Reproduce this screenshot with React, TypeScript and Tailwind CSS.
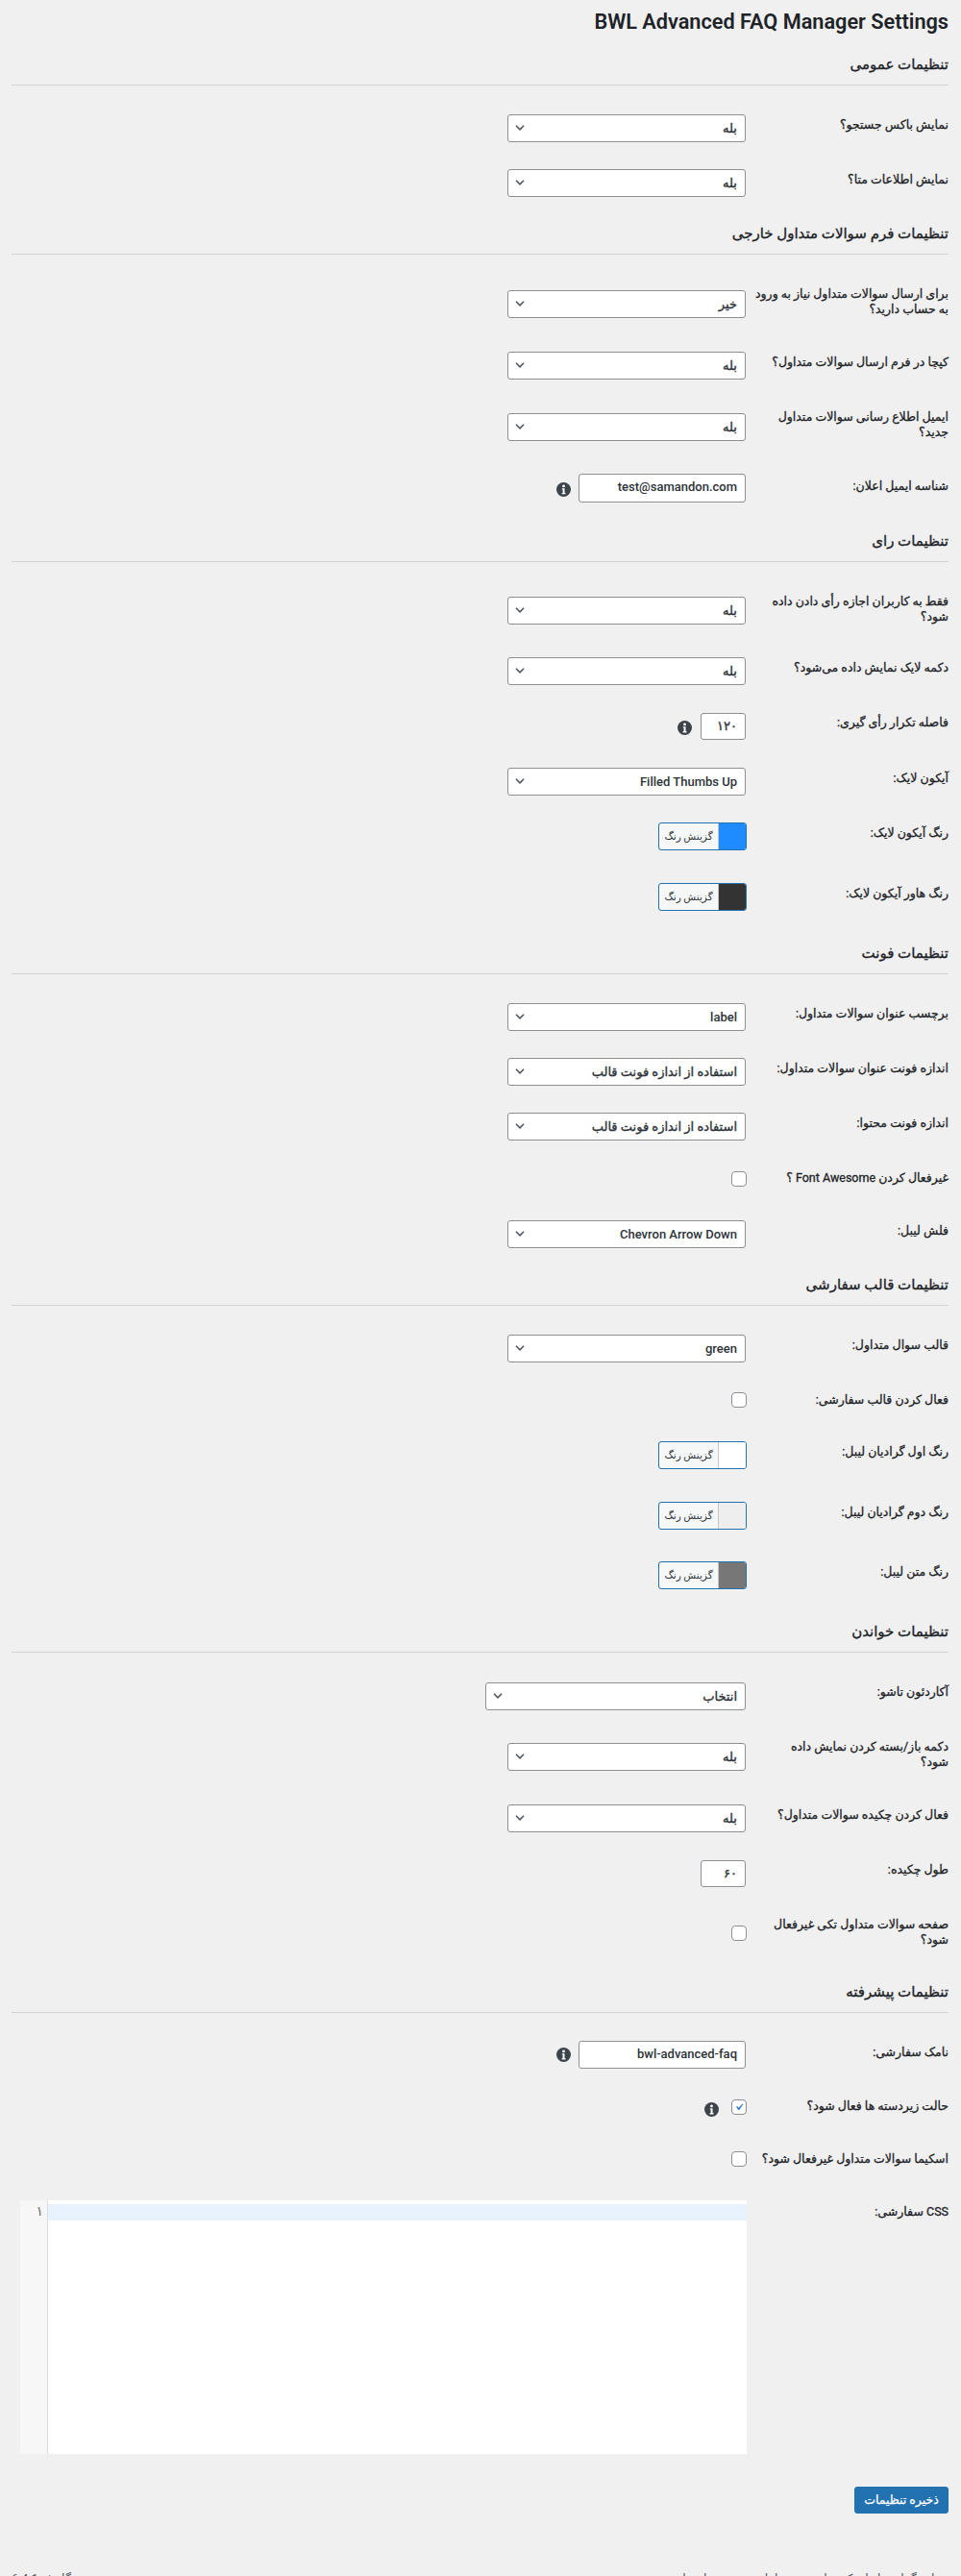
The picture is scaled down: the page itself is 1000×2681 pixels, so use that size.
const fontStack = "font-['Roboto','DejaVu_Sans',sans-serif]";

function Chevron() {
  return (
    <svg viewBox="0 0 20 20" className="w-[16px] h-[16px] shrink-0" fill="none">
      <path d="M5 6l5 5 5-5" stroke="#50575e" strokeWidth="2" />
    </svg>
  );
}

function Info({ className }: { className: string }) {
  return (
    <svg viewBox="0 0 16 16" className={className}>
      <circle cx="8" cy="8" r="8" fill="#3c434a" />
      <circle cx="8" cy="4.2" r="1.5" fill="#fff" />
      <path d="M6.2 6.6h2.9v5.2h1v1.4H6v-1.4h1V8H6.2z" fill="#fff" />
    </svg>
  );
}

function Select({ value, className, latin }: { value: string; className: string; latin?: boolean }) {
  return (
    <div className={`h-[29px] mr-[1px] flex items-center justify-between bg-white border border-[#8c8f94] rounded-[3px] pr-[8px] pl-[4px] text-[#2c3338] ${className}`}>
      {latin ? (
        <span className="text-[13px] font-medium">{value}</span>
      ) : (
        <span className="text-[13px] [-webkit-text-stroke:0.35px_#2c3338]">{value}</span>
      )}
      <Chevron />
    </div>
  );
}

function Input({ value, className, digits }: { value: string; className: string; digits?: boolean }) {
  return (
    <div className={`mr-[1px] flex items-start bg-white border border-[#8c8f94] rounded-[3px] pr-[8px] pt-[3px] text-[13px] font-medium text-[#2c3338] ${digits ? "[-webkit-text-stroke:0.35px_#2c3338]" : ""} ${className}`}>
      {value}
    </div>
  );
}

function Check({ checked }: { checked?: boolean }) {
  return (
    <div className="w-[16px] h-[16px] bg-white border border-[#8c8f94] rounded-[4px] flex items-center justify-center">
      {checked && (
        <svg viewBox="0 0 20 20" className="w-[16px] h-[16px]">
          <path d="M14.83 4.89l1.34.94-5.81 8.38H9.02L5.78 9.67l1.34-1.25 2.57 2.4z" fill="#3582c4" />
        </svg>
      )}
    </div>
  );
}

function Color({ swatch }: { swatch: string }) {
  return (
    <div className="w-[92px] h-[29px] flex bg-[#f6f7f7] border border-[#2271b1] rounded-[3px] overflow-hidden">
      <div className={`w-[29px] border-l border-[#c3c4c7] ${swatch}`} />
      <div className="flex-1 flex items-center justify-center text-[10.5px] text-[#2c3338]">گزینش رنگ</div>
    </div>
  );
}

function Row({ label, h, field, children }: { label: React.ReactNode; h: string; field: string; children: React.ReactNode }) {
  return (
    <div className={`flex items-start ${h}`}>
      <div className="w-[200px] shrink-0 pt-[20px] pl-[10px] whitespace-nowrap text-[12.5px] leading-[16px] text-[#1d2327] [-webkit-text-stroke:0.3px_#1d2327]">{label}</div>
      <div className={`flex-1 flex items-start pr-[10px] ${field}`}>{children}</div>
    </div>
  );
}

function Head({ title }: { title: string }) {
  return (
    <div className="mb-[13px]">
      <h2 className="h-[48px] pt-[17px] text-[15px] leading-[20px] font-normal text-[#1d2327] [-webkit-text-stroke:0.35px_#1d2327]">{title}</h2>
      <div className="border-t border-[#d3d3d4]" />
    </div>
  );
}

const sel = "w-[248px]";

export default function App() {
  return (
    <div dir="rtl" className={`w-[1000px] h-[2681px] overflow-hidden bg-[#f0f0f1] pr-[13px] pl-[12px] ${fontStack}`}>
      <h1 className="h-[40px] pt-[8px] text-[21.7px] leading-[29px] font-semibold text-[#1d2327]">BWL Advanced FAQ Manager Settings</h1>

      <Head title="تنظیمات عمومی" />
      <Row label="نمایش باکس جستجو؟" h="h-[57px]" field="pt-[17px]"><Select value="بله" className={sel} /></Row>
      <Row label="نمایش اطلاعات متا؟" h="h-[57px]" field="pt-[17px]"><Select value="بله" className={sel} /></Row>

      <Head title="تنظیمات فرم سوالات متداول خارجی" />
      <Row label={<>برای ارسال سوالات متداول نیاز به ورود<br />به حساب دارید؟</>} h="h-[71px]" field="pt-[24px]"><Select value="خیر" className={sel} /></Row>
      <Row label="کپچا در فرم ارسال سوالات متداول؟" h="h-[57px]" field="pt-[17px]"><Select value="بله" className={sel} /></Row>
      <Row label={<>ایمیل اطلاع رسانی سوالات متداول<br />جدید؟</>} h="h-[72px]" field="pt-[24px]"><Select value="بله" className={sel} /></Row>
      <Row label="شناسه ایمیل اعلان:" h="h-[58px]" field="pt-[15px] gap-[8px]">
        <Input value="test@samandon.com" className="w-[174px] h-[30px]" />
        <Info className="w-[15px] h-[15px] mt-[9px]" />
      </Row>

      <Head title="تنظیمات رای" />
      <Row label={<>فقط به کاربران اجازه رأی دادن داده<br />شود؟</>} h="h-[69px]" field="pt-[23px]"><Select value="بله" className={sel} /></Row>
      <Row label="دکمه لایک نمایش داده می‌شود؟" h="h-[57px]" field="pt-[17px]"><Select value="بله" className={sel} /></Row>
      <Row label="فاصله تکرار رأی گیری:" h="h-[58px]" field="pt-[18px] gap-[9px]">
        <Input digits value="۱۲۰" className="w-[47px] h-[28px]" />
        <Info className="w-[15px] h-[15px] mt-[8px]" />
      </Row>
      <Row label="آیکون لایک:" h="h-[57px]" field="pt-[17px]"><Select latin value="Filled Thumbs Up" className={sel} /></Row>
      <Row label="رنگ آیکون لایک:" h="h-[63px]" field="pt-[17px]"><Color swatch="bg-[#1e8cff]" /></Row>
      <Row label="رنگ هاور آیکون لایک:" h="h-[63px]" field="pt-[17px]"><Color swatch="bg-[#333333]" /></Row>

      <Head title="تنظیمات فونت" />
      <Row label="برچسب عنوان سوالات متداول:" h="h-[57px]" field="pt-[17px]"><Select latin value="label" className={sel} /></Row>
      <Row label="اندازه فونت عنوان سوالات متداول:" h="h-[57px]" field="pt-[17px]"><Select value="استفاده از اندازه فونت قالب" className={sel} /></Row>
      <Row label="اندازه فونت محتوا:" h="h-[57px]" field="pt-[17px]"><Select value="استفاده از اندازه فونت قالب" className={sel} /></Row>
      <Row label="غیرفعال کردن Font Awesome ؟" h="h-[55px]" field="pt-[21px]"><Check /></Row>
      <Row label="فلش لیبل:" h="h-[57px]" field="pt-[17px]"><Select latin value="Chevron Arrow Down" className={sel} /></Row>

      <Head title="تنظیمات قالب سفارشی" />
      <Row label="قالب سوال متداول:" h="h-[57px]" field="pt-[17px]"><Select latin value="green" className={sel} /></Row>
      <Row label="فعال کردن قالب سفارشی:" h="h-[54px]" field="pt-[20px]"><Check /></Row>
      <Row label="رنگ اول گرادیان لیبل:" h="h-[63px]" field="pt-[17px]"><Color swatch="bg-white" /></Row>
      <Row label="رنگ دوم گرادیان لیبل:" h="h-[62px]" field="pt-[17px]"><Color swatch="bg-[#eeeeee]" /></Row>
      <Row label="رنگ متن لیبل:" h="h-[63px]" field="pt-[17px]"><Color swatch="bg-[#777777]" /></Row>

      <Head title="تنظیمات خواندن" />
      <Row label="آکاردئون تاشو:" h="h-[57px]" field="pt-[18px]"><Select value="انتخاب" className="w-[271px]" /></Row>
      <Row label={<>دکمه باز/بسته کردن نمایش داده<br />شود؟</>} h="h-[71px]" field="pt-[24px]"><Select value="بله" className={sel} /></Row>
      <Row label="فعال کردن چکیده سوالات متداول؟" h="h-[57px]" field="pt-[17px]"><Select value="بله" className={sel} /></Row>
      <Row label="طول چکیده:" h="h-[57px]" field="pt-[18px]"><Input digits value="۶۰" className="w-[47px] h-[28px]" /></Row>
      <Row label={<>صفحه سوالات متداول تکی غیرفعال<br />شود؟</>} h="h-[71px]" field="pt-[29px]"><Check /></Row>

      <Head title="تنظیمات پیشرفته" />
      <Row label="نامک سفارشی:" h="h-[56px]" field="pt-[16px] gap-[8px]">
        <Input value="bwl-advanced-faq" className="w-[174px] h-[29px]" />
        <Info className="w-[15px] h-[15px] mt-[7px]" />
      </Row>
      <Row label="حالت زیردسته ها فعال شود؟" h="h-[55px]" field="pt-[21px] gap-[13px]">
        <Check checked />
        <Info className="w-[15px] h-[15px] mt-[3px]" />
      </Row>
      <Row label="اسکیما سوالات متداول غیرفعال شود؟" h="h-[55px]" field="pt-[20px]"><Check /></Row>
      <Row label="CSS سفارشی:" h="h-[314px]" field="pt-[16px]">
        <div dir="ltr" className="w-[756px] h-[264px] flex bg-white">
          <div className="w-[29px] shrink-0 bg-[#f7f7f7] border-r border-[#dddddd] pt-[4px] pr-[4px] text-right text-[14px] leading-[15px] text-[#6d6d6d]">۱</div>
          <div className="flex-1 pt-[4px]">
            <div className="h-[17px] bg-[#e8f2fe]" />
          </div>
        </div>
      </Row>

      <div className="flex">
        <button className="w-[98px] h-[28px] bg-[#2271b1] border border-[#2271b1] rounded-[3px] text-white text-[12.5px] [-webkit-text-stroke:0.25px_#ffffff]">ذخیره تنظیمات</button>
      </div>

      <div className="flex justify-between mt-[60px] text-[12.5px] leading-[16px] text-[#50575e]">
        <span>سپاس‌گزاریم از این‌که سایت خود را با وردپرس ساخته‌اید.</span>
        <span>نگارش 6.4.1</span>
      </div>
    </div>
  );
}
